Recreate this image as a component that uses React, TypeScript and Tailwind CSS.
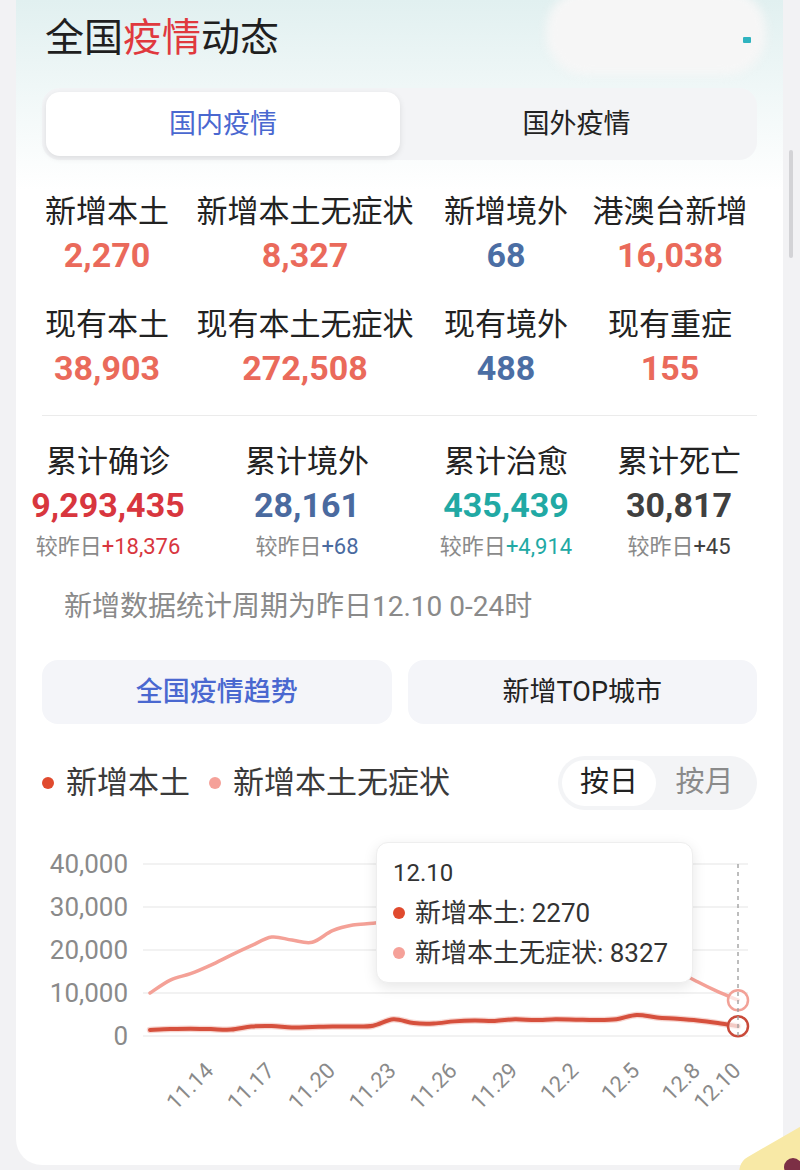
import React from "react";

const pink = [10000, 13000, 14500, 16500, 18800, 21000, 23000, 22300, 21800, 24500, 25800, 26200, 27000, 28500, 31000, 33500, 35500, 36800, 34500, 31500, 29500, 27500, 25000, 23000, 21000, 18500, 15200, 12600, 10300, 8327];
const red = [1400, 1600, 1700, 1600, 1500, 2200, 2300, 2000, 2100, 2200, 2200, 2400, 3900, 3000, 2900, 3400, 3600, 3500, 3900, 3700, 3900, 3800, 3700, 3900, 4900, 4300, 4000, 3600, 3000, 2270];

const X0 = 108;
const DX = 20.28;
const Y0 = 226;
const K = 0.0043;

function smooth(vals: number[]) {
  const p = vals.map((v, i) => [X0 + i * DX, Y0 - v * K]);
  let d = `M${p[0][0]},${p[0][1]}`;
  for (let i = 0; i < p.length - 1; i++) {
    const a = p[i - 1] || p[i];
    const b = p[i];
    const c = p[i + 1];
    const e = p[i + 2] || c;
    const c1x = b[0] + (c[0] - a[0]) / 6;
    const c1y = b[1] + (c[1] - a[1]) / 6;
    const c2x = c[0] - (e[0] - b[0]) / 6;
    const c2y = c[1] - (e[1] - b[1]) / 6;
    d += ` C${c1x},${c1y} ${c2x},${c2y} ${c[0]},${c[1]}`;
  }
  return d;
}

const xLabels: [number, string][] = [
  [3, "11.14"], [6, "11.17"], [9, "11.20"], [12, "11.23"], [15, "11.26"],
  [18, "11.29"], [21, "12.2"], [24, "12.5"], [27, "12.8"], [29, "12.10"],
];

type CellProps = { label: string; value: string; color: string; ml: string; sub?: React.ReactNode };

function Cell({ label, value, color, ml, sub }: CellProps) {
  return (
    <div className={`w-[130px] shrink-0 flex flex-col items-center whitespace-nowrap ${ml}`}>
      <div className="text-[31px] leading-[40px] text-[#222]">{label}</div>
      <div className={`text-[34px] leading-[46px] font-bold ${color}`}>{value}</div>
      {sub}
    </div>
  );
}

function Sub({ num, color }: { num: string; color: string }) {
  return (
    <div className="mt-[4px] text-[22px] leading-[30px] text-[#8a8a8a]">
      较昨日<span className={color}>{num}</span>
    </div>
  );
}

export default function App() {
  const endPinkY = Y0 - 8327 * K;
  const endRedY = Y0 - 2270 * K;
  return (
    <div className="relative w-[800px] h-[1170px] overflow-hidden bg-[#f2f2f4] font-[Roboto,'Noto_Sans_CJK_SC',sans-serif]">
      {/* scrollbar */}
      <div className="absolute left-[789px] top-[150px] w-[4px] h-[108px] rounded-full bg-[#d3d3d6]" />

      <div className="relative ml-[16px] w-[767px] h-[1165px] rounded-b-[26px] overflow-hidden bg-[linear-gradient(180deg,#e1f0f0_0px,#f3f9f9_110px,#ffffff_190px)] px-[26px]">
        {/* redacted blob top right */}
        <div className="absolute left-[530px] top-[-10px] w-[220px] h-[85px] rounded-[40px] bg-[#f6f6f6] blur-[5px]" />
        <div className="absolute left-[727px] top-[37px] w-[8px] h-[6px] bg-[#2fb3bf] rounded-[1px]" />

        {/* title */}
        <div className="relative h-[76px] flex items-center pl-[3px] text-[39px] font-normal text-[#1f1f1f]">
          全国<span className="text-[#e0393e]">疫情</span>动态
        </div>

        {/* tabs */}
        <div className="relative mt-[12px] h-[72px] p-[4px] rounded-[18px] bg-[#f3f4f6] flex">
          <div className="w-[354px] h-full rounded-[14px] bg-white shadow-[0_2px_6px_rgba(0,0,0,0.10)] flex items-center justify-center text-[27px] text-[#4a68d0]">
            国内疫情
          </div>
          <div className="flex-1 flex items-center justify-center text-[27px] text-[#222]">国外疫情</div>
        </div>

        {/* row 1 */}
        <div className="mt-[32px] flex">
          <Cell label="新增本土" value="2,270" color="text-[#ea6a5b]" ml="ml-0" />
          <Cell label="新增本土无症状" value="8,327" color="text-[#ea6a5b]" ml="ml-[68px]" />
          <Cell label="新增境外" value="68" color="text-[#4b6ea4]" ml="ml-[71px]" />
          <Cell label="港澳台新增" value="16,038" color="text-[#ea6a5b]" ml="ml-[34px]" />
        </div>
        {/* row 2 */}
        <div className="mt-[27px] flex">
          <Cell label="现有本土" value="38,903" color="text-[#ea6a5b]" ml="ml-0" />
          <Cell label="现有本土无症状" value="272,508" color="text-[#ea6a5b]" ml="ml-[68px]" />
          <Cell label="现有境外" value="488" color="text-[#4b6ea4]" ml="ml-[71px]" />
          <Cell label="现有重症" value="155" color="text-[#ea6a5b]" ml="ml-[34px]" />
        </div>

        <div className="mt-[24px] h-px bg-[#ebebeb]" />

        {/* row 3 */}
        <div className="mt-[26px] flex">
          <Cell label="累计确诊" value="9,293,435" color="text-[#d8363e]" ml="ml-[1px]" sub={<Sub num="+18,376" color="text-[#d8363e]" />} />
          <Cell label="累计境外" value="28,161" color="text-[#4a6a9f]" ml="ml-[69px]" sub={<Sub num="+68" color="text-[#4a6a9f]" />} />
          <Cell label="累计治愈" value="435,439" color="text-[#21a9a4]" ml="ml-[69px]" sub={<Sub num="+4,914" color="text-[#21a9a4]" />} />
          <Cell label="累计死亡" value="30,817" color="text-[#404040]" ml="ml-[43px]" sub={<Sub num="+45" color="text-[#404040]" />} />
        </div>

        <div className="mt-[28px] pl-[22px] text-[28px] leading-[34px] text-[#8a8a8a]">新增数据统计周期为昨日12.10 0-24时</div>

        {/* buttons */}
        <div className="mt-[36px] flex gap-[16px]">
          <div className="flex-1 h-[64px] rounded-[16px] bg-[#f4f5f9] flex items-center justify-center text-[27px] font-medium text-[#4a68d0]">全国疫情趋势</div>
          <div className="flex-1 h-[64px] rounded-[16px] bg-[#f4f5f9] flex items-center justify-center text-[27px] text-[#222]">新增TOP城市</div>
        </div>

        {/* legend + segmented */}
        <div className="mt-[32px] h-[54px] flex items-center">
          <div className="flex items-center">
            <span className="w-[12px] h-[12px] rounded-full bg-[#e04a2e]" />
            <span className="ml-[12px] text-[31px] text-[#3a3a3a]">新增本土</span>
            <span className="ml-[19px] w-[12px] h-[12px] rounded-full bg-[#f5a199]" />
            <span className="ml-[12px] text-[31px] text-[#3a3a3a]">新增本土无症状</span>
          </div>
          <div className="ml-auto w-[199px] h-[54px] rounded-full bg-[#f3f4f6] p-[4px] flex items-center">
            <div className="w-[94px] h-full rounded-full bg-white flex items-center justify-center text-[29px] text-[#222]">按日</div>
            <div className="flex-1 flex items-center justify-center text-[29px] text-[#8a8a8a]">按月</div>
          </div>
        </div>

        {/* chart */}
        <div className="relative -mr-[26px] h-[355px]">
          <svg width="741" height="355" className="absolute left-0 top-0">
            {[0, 10000, 20000, 30000, 40000].map((v) => {
              const y = Y0 - v * K;
              return (
                <g key={v}>
                  <line x1="101" x2="706" y1={y} y2={y} stroke="#eeeeee" strokeWidth="1.5" />
                  <text x="86" y={y} textAnchor="end" dominantBaseline="central" fontSize="26" fill="#8a8a8a" fontFamily="Roboto, sans-serif">
                    {v.toLocaleString("en-US")}
                  </text>
                </g>
              );
            })}
            <path d={smooth(pink)} fill="none" stroke="#f4a197" strokeWidth="3.5" strokeLinejoin="round" strokeLinecap="round" />
            <path d={smooth(red)} fill="none" stroke="#f0b0a6" strokeWidth="6.5" strokeLinejoin="round" strokeLinecap="round" opacity="0.5" />
            <path d={smooth(red)} fill="none" stroke="#d6503d" strokeWidth="4" strokeLinejoin="round" strokeLinecap="round" />
            <circle cx="696" cy={endPinkY} r="10" fill="white" fillOpacity="0.7" stroke="#f2a197" strokeWidth="2.5" />
            <circle cx="696" cy={endRedY} r="10" fill="white" fillOpacity="0.7" stroke="#c94a3a" strokeWidth="2.5" />
            <line x1="696" x2="696" y1="54" y2="226" stroke="#9a9a9a" strokeWidth="1.3" strokeDasharray="4 4" />
            {xLabels.map(([i, t]) => {
              const x = X0 + i * DX + 4;
              const y = 262;
              return (
                <text key={t} x={x} y={y} textAnchor="end" fontSize="22" fill="#8a8a8a" fontFamily="Roboto, sans-serif" transform={`rotate(-45 ${x} ${y})`}>
                  {t}
                </text>
              );
            })}
          </svg>

          {/* tooltip */}
          <div className="absolute left-[334px] top-[32px] w-[317px] h-[141px] rounded-[12px] bg-white border border-[#eeeeee] shadow-[0_4px_14px_rgba(0,0,0,0.10)] pl-[16px] pt-[14px]">
            <div className="text-[24px] leading-[32px] text-[#333]">12.10</div>
            <div className="mt-[8px] flex items-center h-[32px]">
              <span className="w-[12px] h-[12px] rounded-full bg-[#e04a2e]" />
              <span className="ml-[10px] text-[26px] text-[#333]">新增本土: 2270</span>
            </div>
            <div className="mt-[8px] flex items-center h-[32px]">
              <span className="w-[12px] h-[12px] rounded-full bg-[#f5a199]" />
              <span className="ml-[10px] text-[26px] text-[#333]">新增本土无症状: 8327</span>
            </div>
          </div>
        </div>
      </div>

      {/* floating yellow blob bottom right */}
      <div className="absolute left-[745px] top-[1138px] w-[90px] h-[70px] rounded-[16px] bg-[#f8e9a6] rotate-[-30deg]" />
      <div className="absolute left-[784px] top-[1158px] w-[18px] h-[18px] rounded-full bg-[#7c2f45]" />
    </div>
  );
}
